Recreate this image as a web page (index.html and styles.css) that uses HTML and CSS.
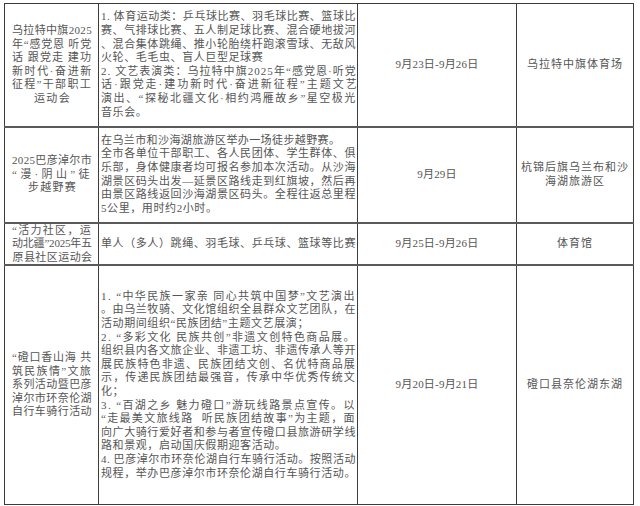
FILE: index.html
```html
<!DOCTYPE html>
<html lang="zh">
<head>
<meta charset="utf-8">
<title>活动安排表</title>
<link rel="stylesheet" href="styles.css">
</head>
<body>
<div class="page">
<table class="sched">
  <colgroup>
    <col class="c-name">
    <col class="c-desc">
    <col class="c-date">
    <col class="c-place">
  </colgroup>
  <tr class="r1">
    <td class="name">
      <span class="l ls-033">乌拉特中旗2025</span>
      <span class="l ls-079">年“感党恩 听党</span>
      <span class="l ls-106">话 跟党走 建功</span>
      <span class="l ls-160">新时代·奋进新</span>
      <span class="l ls-130">征程”干部职工</span>
      <span class="l c ls-130">运动会</span>
    </td>
    <td class="desc">
      <span class="l ls-054">1. 体育运动类：乒乓球比赛、羽毛球比赛、篮球比</span>
      <span class="l ls-059">赛、气排球比赛、五人制足球比赛、混合硬地拔河</span>
      <span class="l ls-059">、混合集体跳绳、推小轮胎绕杆跑滚雪球、无敌风</span>
      <span class="l ls-059">火轮、毛毛虫、盲人巨型足球赛</span>
      <span class="l ls-105">2. 文艺表演类：乌拉特中旗2025年“感党恩·听党</span>
      <span class="l ls-199">话·跟党走·建功新时代·奋进新征程”主题文艺</span>
      <span class="l ls-152">演出、“探秘北疆文化·相约鸿雁故乡”星空极光</span>
      <span class="l ls-059">音乐会。</span>
    </td>
    <td class="date">9月23日-9月26日</td>
    <td class="place">乌拉特中旗体育场</td>
  </tr>
  <tr class="r2">
    <td class="name">
      <span class="l ls-033">2025巴彦淖尔市</span>
      <span class="l ls-335">“漫·阴山”徒</span>
      <span class="l c ls-130">步越野赛</span>
    </td>
    <td class="desc">
      <span class="l ls-040">在乌兰市和沙海湖旅游区举办一场徒步越野赛。</span>
      <span class="l ls-059">全市各单位干部职工、各人民团体、学生群体、俱</span>
      <span class="l ls-059">乐部，身体健康者均可报名参加本次活动。从沙海</span>
      <span class="l ls-059">湖景区码头出发—延景区路线走到红旗坡，然后再</span>
      <span class="l ls-059">由景区路线返回沙海湖景区码头。全程往返总里程</span>
      <span class="l ls-059">5公里，用时约2小时。</span>
    </td>
    <td class="date">9月29日</td>
    <td class="place">
      <span class="l">杭锦后旗乌兰布和沙</span>
      <span class="l">海湖旅游区</span>
    </td>
  </tr>
  <tr class="r3">
    <td class="name">
      <span class="l ls-130">“活力社区，运</span>
      <span class="l ls-n020">动北疆”2025年五</span>
      <span class="l c ls-043">原县社区运动会</span>
    </td>
    <td class="desc">
      <span class="l ls-059">单人（多人）跳绳、羽毛球、乒乓球、篮球等比赛</span>
    </td>
    <td class="date">9月25日-9月26日</td>
    <td class="place">体育馆</td>
  </tr>
  <tr class="r4">
    <td class="name">
      <span class="l ls-079">“磴口香山海 共</span>
      <span class="l ls-130">筑民族情”文旅</span>
      <span class="l ls-043">系列活动暨巴彦</span>
      <span class="l ls-043">淖尔市环奈伦湖</span>
      <span class="l ls-043">自行车骑行活动</span>
    </td>
    <td class="desc">
      <span class="l ls-139">1. “中华民族一家亲 同心共筑中国梦”文艺演出</span>
      <span class="l ls-059">。由乌兰牧骑、文化馆组织全县群众文艺团队，在</span>
      <span class="l ls-059">活动期间组织“民族团结”主题文艺展演；</span>
      <span class="l ls-139">2. “多彩文化 民族共创”非遗文创特色商品展。</span>
      <span class="l ls-059">组织县内各文旅企业、非遗工坊、非遗传承人等开</span>
      <span class="l ls-114">展民族特色非遗、民族团结文创、名优特商品展</span>
      <span class="l ls-114">示，传递民族团结最强音，传承中华优秀传统文</span>
      <span class="l ls-059">化；</span>
      <span class="l ls-139">3. “百湖之乡 魅力磴口”游玩线路景点宣传。以</span>
      <span class="l ls-133">“走最美文旅线路&nbsp; 听民族团结故事”为主题，面</span>
      <span class="l ls-059">向广大骑行爱好者和参与者宣传磴口县旅游研学线</span>
      <span class="l ls-059">路和景观，启动国庆假期迎客活动。</span>
      <span class="l ls-054">4. 巴彦淖尔市环奈伦湖自行车骑行活动。按照活动</span>
      <span class="l ls-059">规程，举办巴彦淖尔市环奈伦湖自行车骑行活动。</span>
    </td>
    <td class="date">9月20日-9月21日</td>
    <td class="place">磴口县奈伦湖东湖</td>
  </tr>
</table>
</div>
</body>
</html>
```

FILE: styles.css
```css
html, body {
  margin: 0;
  padding: 0;
  background: #ffffff;
}

.page {
  width: 640px;
  height: 506px;
  padding: 3px 0 0 4px;
  box-sizing: border-box;
  overflow: hidden;
}

.sched {
  border-collapse: collapse;
  table-layout: fixed;
  width: 629px;
  font-family: "Liberation Serif", "Noto Sans CJK SC", serif;
  font-size: 11px;
  line-height: 13.6px;
  color: #555555;
}

.c-name { width: 94px; }
.c-desc { width: 259px; }
.c-date { width: 159px; }
.c-place { width: 117px; }

.sched td {
  border: 1px solid #3c3c3c;
  padding: 0;
  vertical-align: middle;
  text-align: center;
  overflow: hidden;
}

.sched tr + tr td {
  border-top: 2px solid #5a5a5a;
}

.r1 { height: 123px; }
.r2 { height: 96px; }
.r3 { height: 41px; }
.r4 { height: 239px; }

.l {
  display: block;
  white-space: nowrap;
}

.c {
  text-align: center;
}

.name {
  padding: 0 5px 0 7px !important;
  text-align: left !important;
}

.desc {
  padding: 0 2px 0 2px !important;
  text-align: left !important;
}

/* per-line tracking to reproduce the justified lines of the source table */
.ls-n020 { letter-spacing: -0.2px; }
.ls-033 { letter-spacing: 0.33px; }
.ls-040 { letter-spacing: 0.4px; }
.ls-043 { letter-spacing: 0.43px; }
.ls-054 { letter-spacing: 0.54px; }
.ls-059 { letter-spacing: 0.59px; }
.ls-079 { letter-spacing: 0.79px; }
.ls-105 { letter-spacing: 1.05px; }
.ls-106 { letter-spacing: 1.06px; }
.ls-114 { letter-spacing: 1.14px; }
.ls-130 { letter-spacing: 1.3px; }
.ls-133 { letter-spacing: 1.33px; }
.ls-139 { letter-spacing: 1.39px; }
.ls-152 { letter-spacing: 1.52px; }
.ls-160 { letter-spacing: 1.6px; }
.ls-199 { letter-spacing: 1.99px; }
.ls-335 { letter-spacing: 3.35px; }

.date {
  letter-spacing: 0.2px;
}

.place {
  letter-spacing: 1px;
}

.place .l {
  text-align: center;
}
```
